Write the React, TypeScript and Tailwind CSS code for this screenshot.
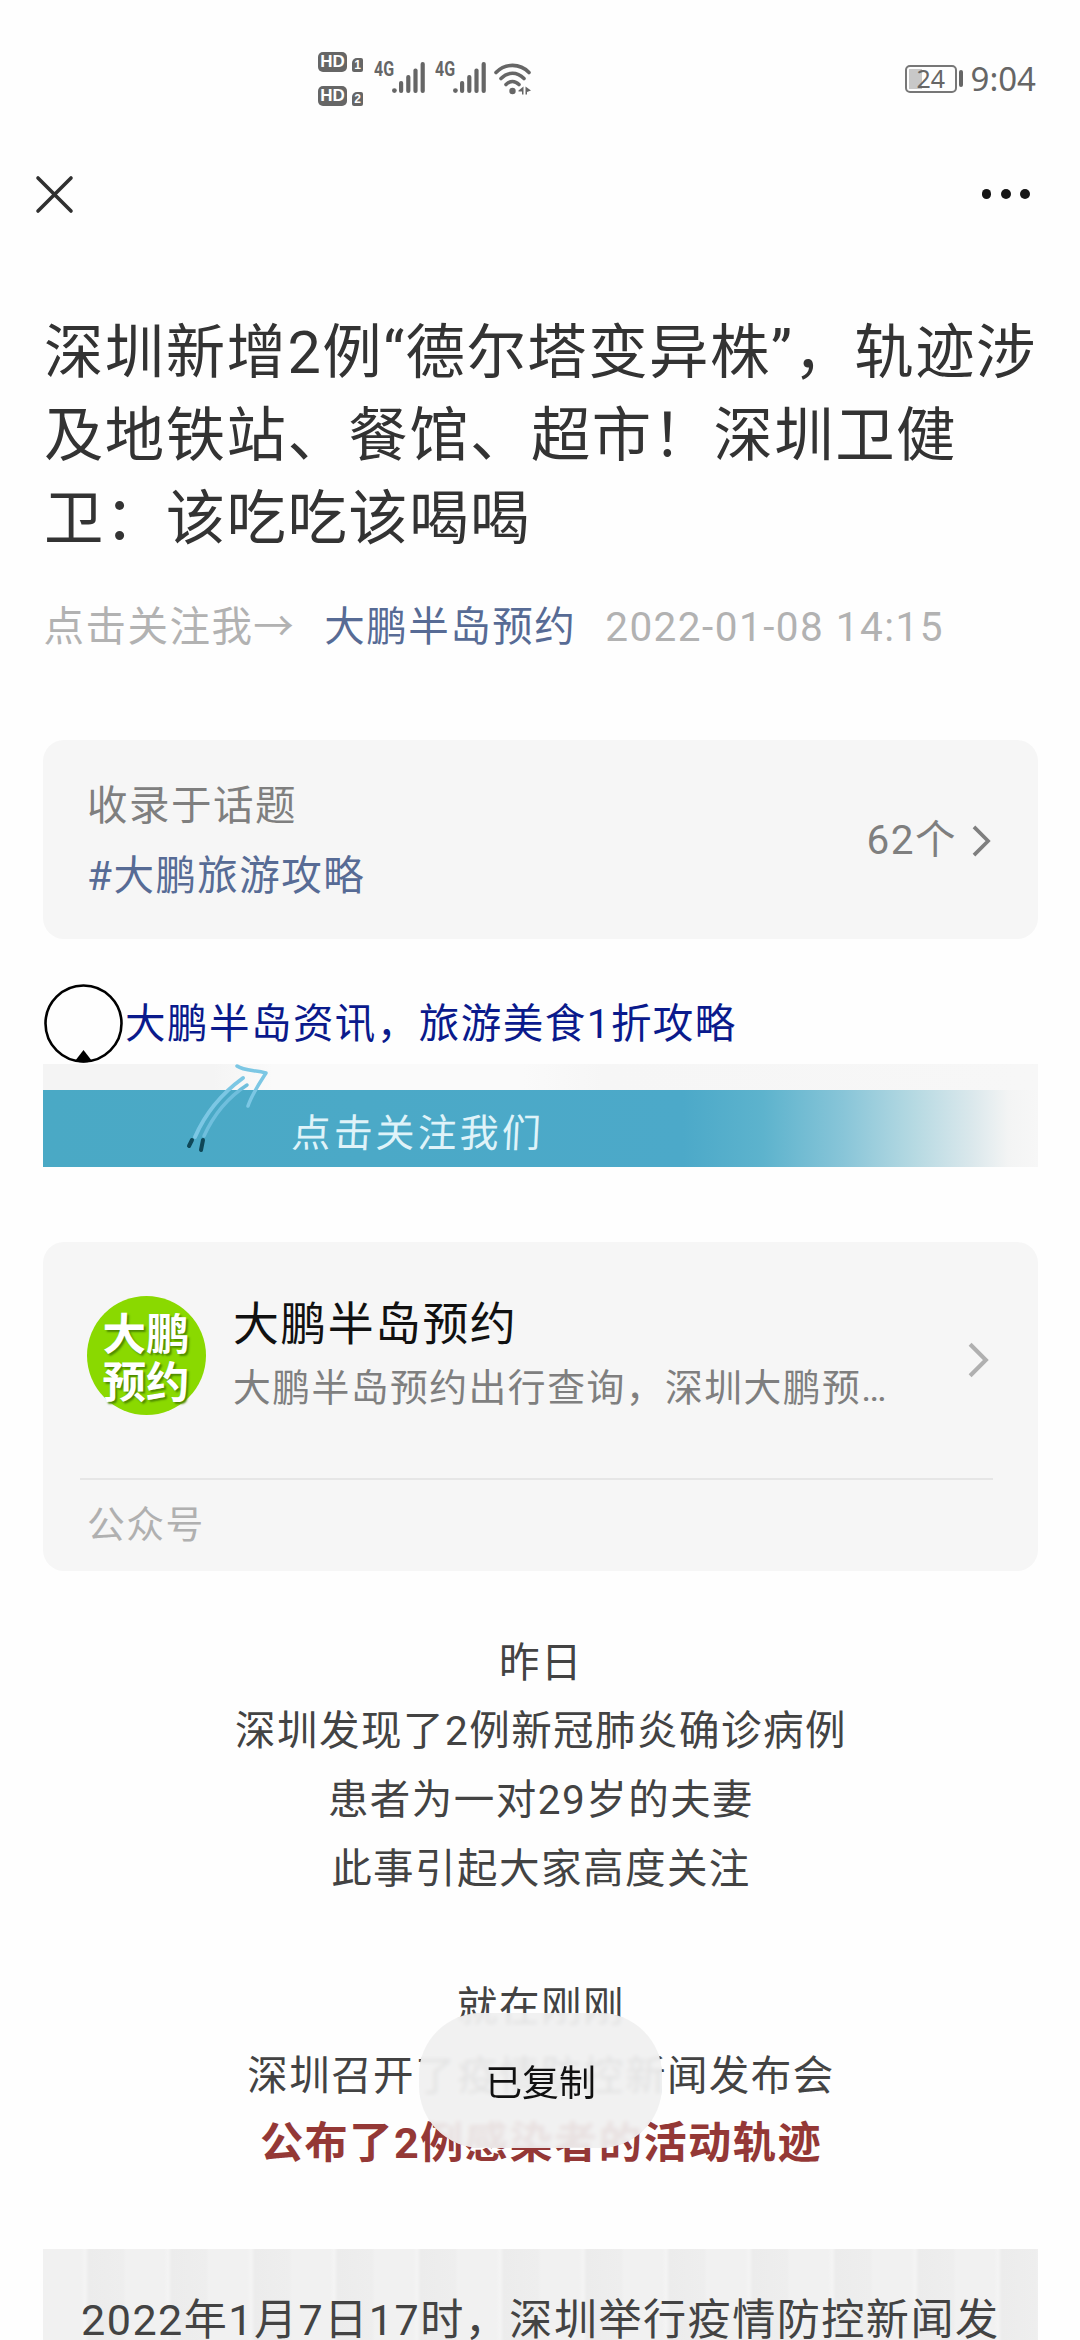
import { ReactNode } from 'react'
import clsx from 'clsx'


const SignalBars = () => (
  <svg width="33" height="32" viewBox="0 0 33 32" fill="#666">
    <circle cx="2.4" cy="28.6" r="2.4" />
    <rect x="7" y="19" width="4.2" height="12" rx="2" />
    <rect x="14.2" y="13" width="4.2" height="18" rx="2" />
    <rect x="21.4" y="6.5" width="4.2" height="24.5" rx="2" />
    <rect x="28.6" y="0" width="4.2" height="31" rx="2" />
  </svg>
)

const HdBadge = ({ sim }: { sim: string }) => (
  <div className="flex items-end gap-[5px]">
    <div className="flex h-[20px] w-[29px] items-center justify-center rounded-[5px] bg-[#666] font-['Liberation_Sans'] text-[17px] font-bold leading-none text-white">
      HD
    </div>
    <div className="flex h-[14px] w-[11px] items-center justify-center rounded-[2px] rounded-tl-[5px] bg-[#666] font-['Liberation_Sans'] text-[12px] font-bold leading-none text-white">
      {sim}
    </div>
  </div>
)

const Network = () => (
  <div className="flex items-start">
    <span className="w-[18px] origin-left scale-x-[.8] font-['Roboto'] text-[20px] font-bold leading-[14px] text-[#666]">
      4G
    </span>
    <SignalBars />
  </div>
)

const StatusBar = () => (
  <div className="flex h-[156px] items-center pr-[44px] pl-[318px] tracking-normal">
    <div className="mt-[1px] flex flex-col gap-[14px]">
      <HdBadge sim="1" />
      <HdBadge sim="2" />
    </div>
    <div className="ml-[11px] flex gap-[10px]">
      <Network />
      <Network />
    </div>
    <svg className="mt-[1px] ml-[8px]" width="38" height="32" viewBox="0 0 38 32" fill="none" stroke="#666" strokeWidth="3.6" strokeLinecap="round">
      <path d="M2 9.5C11 0 26 0 35 9.5" />
      <path d="M7 15.5C14 8.5 23 8.5 30 15.5" />
      <path d="M12 21.5C16 17.5 21 17.5 25 21.5" />
      <circle cx="18.5" cy="28" r="3.2" fill="#666" stroke="none" />
      <path d="M24.5 27.5L29.5 23.5V31.5H28V28.5H24.5ZM31.5 23.5L37 27.5L33 29V31.5H31.5Z" fill="#666" stroke="none" />
    </svg>

    <div className="mt-[1px] ml-auto flex items-center">
      <div className="flex h-[28px] w-[52px] items-center rounded-[5px] border-2 border-[#777] p-[2px]">
        <div className="h-full w-[13px] bg-[#c8c8c8]" />
        <span className="-ml-[5px] font-['Noto_Sans'] text-[25px] leading-none text-[#666]">24</span>
      </div>
      <div className="ml-[2px] h-[17px] w-[4px] rounded-full bg-[#666]" />
      <span className="ml-[8px] font-['Noto_Sans'] text-[33px] leading-none text-[#666]">9:04</span>
    </div>
  </div>
)

const NavBar = () => (
  <div className="flex h-[76px] items-center justify-between pr-[50px] pl-[35px]">
    <svg width="39" height="39" viewBox="0 0 39 39" stroke="#303030" strokeWidth="3.6" strokeLinecap="round">
      <path d="M3 3L36 36M36 3L3 36" />
    </svg>
    <div className="flex gap-[9.5px]">
      <span className="size-[9.8px] rounded-full bg-[#151515]" />
      <span className="size-[9.8px] rounded-full bg-[#151515]" />
      <span className="size-[9.8px] rounded-full bg-[#151515]" />
    </div>
  </div>
)

const Chevron = ({ className }: { className: string }) => (
  <svg className={className} viewBox="0 0 20 34" fill="none" stroke="currentColor" strokeWidth="3.9">
    <path d="M2 2L17 17L2 32" />
  </svg>
)

const Banner = () => (
  <div className="relative h-[103px] w-[995px] bg-[linear-gradient(90deg,#f4f4f4_0,#f4f4f4_170px,#fafafa_230px,#fafafa_480px,#f6f6f6_560px,#f7f7f7_100%)] pt-[26px]">
    <div className="flex h-[77px] items-center bg-[linear-gradient(90deg,#4aa9c5_0,#4ca9c9_640px,#5db3cd_720px,#88c5d8_800px,#b5d9e2_870px,#dbe8ec_930px,#f3f4f4_965px,#f7f7f7_100%)] pl-[249px]">
      <span className="-skew-x-3 pt-[3px] font-['Noto_Sans_CJK_SC',sans-serif] text-[39px] leading-none tracking-[3px] text-[#dff3f9]">
        点击关注我们
      </span>
    </div>
    {/* sketched arrow that runs over the top edge of the blue strip */}
    <svg className="absolute top-0 left-[138px]" width="92" height="92" viewBox="0 0 92 92" fill="none" strokeLinecap="round" strokeLinejoin="round">
      <path d="M14 73C24 50 40 30 62 14" stroke="#7cc7e4" strokeWidth="4" />
      <path d="M23 72C33 50 46 34 66 21" stroke="#6fbfdd" strokeWidth="3.5" />
      <path d="M56 2C63 7 74 6 85 9C78 20 71 30 67 42" stroke="#7cc7e4" strokeWidth="3.5" />
      <path d="M8 82L11 76M20 86L22 76" stroke="#0f4757" strokeWidth="4" />
    </svg>
  </div>
)

const Line = ({ children, strong }: { children?: ReactNode; strong?: boolean }) => (
  <p
    className={clsx(
      'h-[68.85px] leading-[68.85px]',
      strong ? 'text-[43.2px] font-bold text-[#943836]' : 'text-[40.5px] text-[#434343]'
    )}
  >
    {children}
  </p>
)

const App = () => {
  return (
    <div className="relative h-[2340px] w-[1080px] overflow-hidden bg-[#fefefe] font-['Roboto','Noto_Sans_CJK_SC',sans-serif] tracking-[1.47px]">
      <StatusBar />
      <NavBar />

      <main className="px-[43px]">
        <h1 className="mt-[80px] pl-[1px] text-[59.4px] leading-[83.2px] whitespace-nowrap text-[#333]">
          深圳新增2例“德尔塔变异株”，轨迹涉
          <br />
          及地铁站、餐馆、超市！深圳卫健
          <br />
          卫：该吃吃该喝喝
        </h1>

        <div className="mt-[37px] flex h-[56px] items-center pl-[0.5px] text-[40.5px] leading-[56px] whitespace-nowrap text-[#b2b2b2]">
          <span>点击关注我→</span>
          <span className="ml-[29px] text-[#576b95]">大鹏半岛预约</span>
          <span className="ml-[29px]">2022-01-08 14:15</span>
        </div>

        <section className="mt-[85.4px] flex h-[199px] w-[995px] items-center justify-between rounded-[21px] bg-[#f6f6f6] pt-[2px] pr-[47px] pl-[44px]">
          <div className="text-[40.5px] leading-[70px]">
            <p className="text-[#7f7f7f]">收录于话题</p>
            <p className="text-[#576b95]">#大鹏旅游攻略</p>
          </div>
          <div className="flex items-center text-[40.5px] text-[#7f7f7f]">
            <span>62个</span>
            <Chevron className="ml-[15px] h-[32px] w-[19px]" />
          </div>
        </section>

        <div className="mt-[45px] flex h-[80px] items-center">
          <svg className="ml-[1px]" width="80" height="80" viewBox="0 0 80 80">
            <circle cx="39.5" cy="39.5" r="38" fill="none" stroke="#000" strokeWidth="2.6" />
            <path d="M39.5 66L48 77Q39.5 80 31 77Z" />
          </svg>
          <span className="ml-[1px] text-[40.5px] leading-none text-[#0a1a8c]">大鹏半岛资讯，旅游美食1折攻略</span>
        </div>
        <Banner />

        <section className="mt-[75px] h-[329px] w-[995px] rounded-[21px] bg-[#f6f6f6] pt-[54px]">
          <div className="flex h-[182px] items-start pr-[49px] pl-[43.5px]">
            <div className="flex size-[119px] shrink-0 flex-col items-center justify-center rounded-full bg-[#8ad900] font-['Noto_Sans_CJK_SC',sans-serif] text-[43.5px] leading-[48px] font-bold tracking-normal text-white [text-shadow:2px_2px_2px_#4f8a00]">
              <span>大鹏</span>
              <span>预约</span>
            </div>
            <div className="ml-[27.5px] whitespace-nowrap">
              <p className="text-[45.9px] leading-[56px] text-[#111]">大鹏半岛预约</p>
              <p className="mt-[8px] text-[37.8px] leading-[56px] text-[#7f7f7f]">大鹏半岛预约出行查询，深圳大鹏预…</p>
            </div>
            <Chevron className="mt-[46px] ml-auto h-[36px] w-[21px] text-[#b0b0b0]" />
          </div>
          <div className="mr-[45px] ml-[37px] h-[2px] bg-[#e6e6e6]" />
          <p className="mt-[17px] ml-[44px] text-[37.8px] leading-[56px] text-[#b0b0b0]">公众号</p>
        </section>

        <article className="mt-[57.5px] pl-[2px] text-center whitespace-nowrap">
          <Line>昨日</Line>
          <Line>深圳发现了2例新冠肺炎确诊病例</Line>
          <Line>患者为一对29岁的夫妻</Line>
          <Line>此事引起大家高度关注</Line>
          <Line />
          <Line>就在刚刚</Line>
          <Line>深圳召开了疫情防控新闻发布会</Line>
          <Line strong>公布了2例感染者的活动轨迹</Line>
        </article>

        <blockquote className="mt-[69.5px] h-[93px] w-[995px] bg-[repeating-linear-gradient(90deg,#f1f1f1_0,#f1f1f1_38px,#f4f4f4_42px,#ececec_46px,#eeeeee_80px,#f1f1f1_83px)] pt-[35px] pl-[38px] text-[43.1px] leading-[74px] whitespace-nowrap text-[#434343]">
          2022年1月7日17时，深圳举行疫情防控新闻发
        </blockquote>
      </main>

      <div className="absolute top-[2013px] left-[419px] flex h-[135px] w-[243px] items-center justify-center rounded-[62px] bg-[#f0f0f0]/92 pt-[6px] text-[36.9px] tracking-normal text-[#111] backdrop-blur-[2px]">
        已复制
      </div>
    </div>
  )
}

export default App
